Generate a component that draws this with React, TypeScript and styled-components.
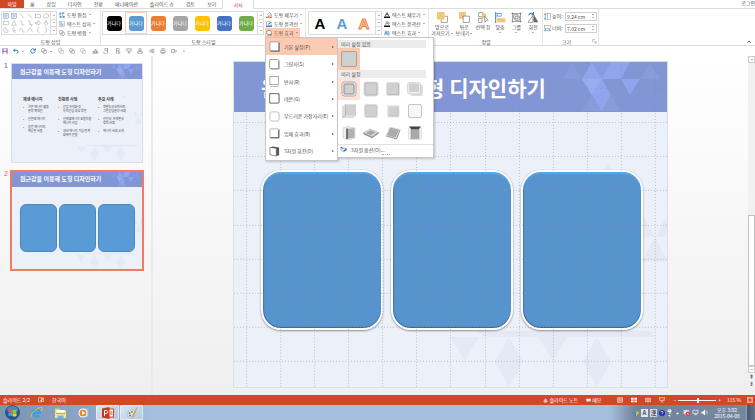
import React from "react";
import styled, { createGlobalStyle, css } from "styled-components";

const font = `"Liberation Sans", "Noto Sans CJK KR", sans-serif`;
const accent = "#d24726";
const peach = "#fdcbb1";
const line = "#dcdcdc";

const GlobalStyle = createGlobalStyle`
  * { box-sizing: border-box; }
  body { margin: 0; font: 5px/6px "Noto Sans CJK KR", sans-serif; color: #505050; background: #fff; overflow: hidden; }
  button, input { font: inherit; color: inherit; }
  button { border: 0; margin: 0; padding: 0; background: none; white-space: nowrap; }
  svg { display: block; flex: none; }
`;

/* ---------- icons ---------- */

const B = "#3f7fc1";
const G = "#7d7d7d";
const Y = "#eec777";

const art: Record<string, React.ReactNode> = {
  textframe: <><rect x="1" y="1" width="14" height="14" fill="#e8f1fa" stroke={B} /><path d="M4 5h8M4 8h8M4 11h5" stroke={G} /></>,
  line: <path d="M2 2l12 12" stroke={G} />,
  rect: <rect x="1" y="3" width="14" height="10" fill="none" stroke={G} />,
  oval: <ellipse cx="8" cy="8" rx="7" ry="6" fill="none" stroke={G} />,
  tri: <path d="M8 2l6 12H2z" fill="none" stroke={G} />,
  elbow: <path d="M2 3h6v10h6" fill="none" stroke={G} />,
  elbowArrow: <path d="M2 3h6v10h6M11 10l3 3-3 3" fill="none" stroke={G} />,
  arrowR: <path d="M1 6h7V2l7 6-7 6v-4H1z" fill="none" stroke={G} />,
  arrowD: <path d="M6 1h4v7h4l-6 7-6-7h4z" fill="none" stroke={G} />,
  freeform: <path d="M2 4l5-2 1 5 6 2-2 5H3z" fill="none" stroke={G} />,
  spiral: <path d="M13 13c-4 3-9-1-6-4s6-1 4 1-5-2-7-4 2-5 6-4" fill="none" stroke={G} />,
  curve: <path d="M1 10C4 0 8 3 9 8s2 6 6 6" fill="none" stroke={G} />,
  wave: <path d="M1 13C4 13 4 3 8 3s3 10 7 10" fill="none" stroke={G} />,
  braceL: <path d="M11 1C6 1 9 8 5 8c4 0 1 7 6 7" fill="none" stroke={G} />,
  braceR: <path d="M5 1c5 0 2 7 6 7-4 0-1 7-6 7" fill="none" stroke={G} />,
  editShape: <><path d="M3 4l9-2-3 6 5 6-11-2z" fill="none" stroke={B} strokeWidth="1.5" /><path d="M1 2h4v4H1zM10 1h4v3h-4zM2 11h4v4H2zM11 11h4v4h-4z" fill={B} /></>,
  textbox: <><rect x="1" y="2" width="14" height="12" fill="#fff" stroke={G} /><path d="M3 5h5M3 8h9M3 11h9" stroke={B} strokeWidth="1.5" /></>,
  merge: <><circle cx="6" cy="6" r="5" fill="#fff" stroke={G} strokeWidth="1.5" /><circle cx="10" cy="10" r="5" fill="none" stroke={G} strokeWidth="1.5" /></>,
  fill: <><path d="M4 6l5-5 5 5-5 5z" fill="#fff" stroke={G} strokeWidth="1.5" /><path d="M13 6c2 2 2 4 1 4" stroke={B} fill="none" strokeWidth="2" /><rect x="0" y="12" width="16" height="4" fill="#ed7d31" /></>,
  outline: <><path d="M2 1h9M1 2v9M14 6v6" stroke={B} strokeWidth="1.5" /><path d="M5 10l1-3 7-6 2 2-7 6z" fill={B} /><rect x="0" y="12" width="16" height="4" fill={B} /></>,
  effect: <><path d="M5 1h7l3 5-3 6H5L1 6z" fill="#fff" stroke={G} strokeWidth="2" /><path d="M5 14h9l2-6" stroke={G} fill="none" strokeWidth="2" /></>,
  textFill: <><path d="M3 11L8 1l5 10M5 7h6" fill="none" stroke="#333" strokeWidth="2" /><rect x="0" y="12" width="16" height="4" fill="#111" /></>,
  textOutline: <><path d="M3 11L8 1l5 10M5 7h6" fill="none" stroke={G} strokeWidth="2" /><path d="M12 2l2 6" stroke={B} strokeWidth="2" /><rect x="0" y="12" width="16" height="4" fill="#111" /></>,
  textEffect: <><path d="M1 14L5 2l4 12M3 9h5" fill="none" stroke={B} strokeWidth="2" /><path d="M10 3h3q2 2 0 5 4 3 0 6h-3z" fill="#bcd6ef" stroke={B} /></>,
  front: <><rect x="6" y="6" width="9" height="9" fill="#fff" stroke={G} /><rect x="0" y="0" width="11" height="11" fill={Y} /></>,
  back: <><rect x="0" y="0" width="10" height="10" fill={Y} /><rect x="6" y="6" width="9" height="9" fill="#fff" stroke={G} /></>,
  pane: <><rect x="1" y="1" width="6" height="6" fill="#fff" stroke={G} /><rect x="6" y="2" width="6" height="7" fill={Y} /><rect x="1" y="9" width="5" height="6" fill="#fff" stroke={G} /><path d="M9 6l6 6h-3l-2 3z" fill="#fff" stroke={G} /></>,
  align: <><path d="M1 0v16" stroke={B} strokeWidth="1.5" /><rect x="3" y="2" width="6" height="4" fill="#fff" stroke={B} /><rect x="3" y="9" width="12" height="6" fill={Y} /></>,
  group: <><rect x="2" y="2" width="12" height="12" fill="none" stroke={G} /><rect x="4" y="4" width="6" height="6" fill="none" stroke={G} /><rect x="6" y="6" width="6" height="6" fill="none" stroke={G} /><path d="M1 1h2v2H1zM13 1h2v2h-2zM1 13h2v2H1zM13 13h2v2h-2z" fill={B} /></>,
  rotate: <><path d="M8 15V3l7 12z" fill="#666" /><path d="M7 15V5L0 15z" fill="#fff" stroke={G} /><path d="M1 5c1-4 5-4 7-2M8 0v4H5" fill="none" stroke={B} strokeWidth="1.5" /></>,
  height: <><path d="M3 1v14M1 4l2-3 2 3M1 12l2 3 2-3" fill="none" stroke={B} strokeWidth="1.5" /><rect x="8" y="1" width="7" height="14" fill="#fff" stroke={G} /></>,
  width: <><rect x="1" y="1" width="14" height="7" fill="#fff" stroke={G} /><path d="M1 12h14M4 10l-3 2 3 3M12 10l3 2-3 3" fill="none" stroke={B} strokeWidth="1.5" /></>,
  launcher: <path d="M2 10V2h8M6 6l7 7M13 8v5H8" fill="none" stroke={G} strokeWidth="1.5" />,
  save: <><path d="M1 1h14v14H1z" fill="#8d5ca8" /><path d="M4 2h8v5H4zM4 10h8v5H4z" fill="#fff" /></>,
  undo: <path d="M5 2L1 6l4 4M2 6h8c5 0 5 8 0 8" fill="none" stroke="#2e6bb4" strokeWidth="2.5" />,
  redo: <path d="M13 5C10 0 2 2 2 8s9 8 12 1M14 1v5H9" fill="none" stroke="#2e6bb4" strokeWidth="2.5" />,
  union: <><circle cx="6" cy="6" r="5" fill="none" stroke="#888" strokeWidth="1.5" /><circle cx="10" cy="10" r="5" fill="none" stroke="#888" strokeWidth="1.5" /><path d="M6 10l4-4" stroke="#888" /></>,
  circles: <><circle cx="6" cy="6" r="5" fill="none" stroke="#aaa" strokeWidth="1.5" /><circle cx="10" cy="10" r="5" fill="none" stroke="#aaa" strokeWidth="1.5" /></>,
  bars: <><path d="M1 14h14M3 14V8h3v6M8 14V4h3v10" fill="none" stroke={G} strokeWidth="1.5" /><path d="M12 8h3v5h-3z" fill={B} /></>,
  flagL: <path d="M12 1H5v6h7zM12 1v14M3 11l-2 2 2 2h6" fill="none" stroke={G} strokeWidth="1.5" />,
  flagR: <path d="M4 15V1h7v6H4M9 9l5 3-5 3z" fill="none" stroke={G} strokeWidth="1.5" />,
  flagD: <path d="M2 2h12v6H2zM8 8v7M5 11l3 3 3-3" fill="none" stroke={G} strokeWidth="1.5" />,
  person: <path d="M5 2h6v5H5zM2 14V9h12v5z" fill="none" stroke={G} strokeWidth="1.5" />,
  speaker: <path d="M1 8l5-4v8zM9 3h4v10H9z" fill="none" stroke={G} strokeWidth="1.5" />,
  printer: <path d="M5 6V1h6v5M2 6h12v6H2zM5 12v3h6v-3" fill="none" stroke={G} strokeWidth="1.5" />,
  next: <path d="M1 4h8v8H1zM9 8h6M12 5l3 3-3 3" fill="none" stroke={G} strokeWidth="1.5" />,
  proof: <path d="M1 2h9v11H1zM10 3h5v9h-5M5 8l3 3 6-8" fill="none" stroke="#fff" strokeWidth="1.5" />,
  notes: <path d="M1 11h14M4 14h8M8 2l4 6H4z" fill="none" stroke="#fff" strokeWidth="2" />,
  memo: <path d="M1 2h14v8H9l-3 4v-4H1z" fill="#fff" />,
  viewNormal: <path d="M1 2h14v12H1zM5 2v12M7 5h6v5H7z" fill="none" stroke="#fff" strokeWidth="1.5" />,
  viewGrid: <path d="M0 2h7v5H0zM9 2h7v5H9zM0 9h7v5H0zM9 9h7v5H9z" fill="#fff" />,
  viewRead: <path d="M8 4C6 2 3 2 1 3v10c2-1 5-1 7 1 2-2 5-2 7-1V3c-2-1-5-1-7 1v10" fill="#e58b75" stroke="#fff" />,
  viewShow: <path d="M0 2h16M2 2v7h12V2M8 9v4M5 15l3-3 3 3" fill="none" stroke="#fff" strokeWidth="1.5" />,
  fit: <path d="M1 1h14v14H1zM4 7V4h3M9 4h3v3M12 9v3H9M7 12H4V9" fill="none" stroke="#fff" strokeWidth="1.5" />,
  rotateBox: <><path d="M1 4l7-2 5 4-3 8-7-3z" fill="#dfe9f3" stroke="#8aa" /><path d="M2 3l5 3M8 12l6-4M13 5l2 5" stroke="#2e6bb4" strokeWidth="2.5" /></>,
  shield: <><path d="M8 0L0 8l8 8z" fill="#3f7fd6" /><path d="M8 0l8 8-8 8z" fill="#e6c33c" /><path d="M4 4l4-4 4 4-4 4z" fill="#6bb045" /></>,
  help: <><circle cx="8" cy="8" r="8" fill="#1c2fae" /><path d="M5 6c0-4 6-3 6 0 0 2-3 2-3 4M8 12v1" fill="none" stroke="#fff" strokeWidth="2" /></>,
  net: <><path d="M2 3h11v8H2zM5 14h6" fill="#d5dbe4" stroke="#eee" /><circle cx="11" cy="11" r="5" fill="#dc2f2f" /><path d="M9 9l4 4M13 9l-4 4" stroke="#fff" strokeWidth="1.5" /></>,
  drive: <path d="M2 3h12v7H2zM5 13h7M8 10v3" fill="#7d8794" stroke="#f4f4f4" strokeWidth="1.5" />,
  volume: <><path d="M1 6h3l5-5v14L4 10H1z" fill="#fff" /><path d="M11 5q2 3 0 6M13 3q4 5 0 10" stroke="#fff" fill="none" /></>,
};

const Icon = ({ name, size = 6 }: { name: string; size?: number }) => (
  <svg width={size} height={size} viewBox="0 0 16 16" aria-hidden="true">{art[name]}</svg>
);

const Caret = styled.i`
  flex: none;
  border: 1px solid transparent;
  border-top-color: #666;
  border-bottom: 0;
`;

/* ---------- tabs ---------- */

const Page = styled.div`
  display: grid;
  grid-template-rows: 9px 37px 10px 1fr 10px 15px;
  min-height: 100vh;
  font-family: "Noto Sans CJK KR", sans-serif;
`;

const Tabs = styled.nav`
  display: flex;
  border-bottom: 1px solid ${line};
`;

const Tab = styled.button<{ $kind?: "file" | "active" }>`
  padding: 0 6px;
  line-height: 8px;
  ${(p) => p.$kind === "file" && css`width: 24px; background: ${accent}; color: #fff;`}
  ${(p) => p.$kind === "active" && css`
    height: 9px; padding: 0 10px; color: ${accent}; background: #fff;
    border: solid ${line}; border-width: 0 1px;
  `}
`;

const SignIn = styled.a`
  margin-left: auto;
  color: inherit;
  text-decoration: none;
  line-height: 6px;
`;

/* ---------- ribbon ---------- */

const Ribbon = styled.section`
  display: flex;
  border-bottom: 1px solid ${line};
`;

const Group = styled.div<{ $w: number }>`
  display: flex;
  flex-direction: column;
  justify-content: space-between;
  flex: none;
  width: ${(p) => p.$w}px;
  padding: 1px 0 0 1px;
  border-right: 1px solid #e6e6e6;
`;

const GroupBody = styled.div<{ $gap?: number }>`
  display: flex;
  gap: ${(p) => p.$gap ?? 1}px;
`;

const GroupLabel = styled.div`
  display: flex;
  justify-content: center;
  line-height: 6px;
`;

const SizeLabel = styled(GroupLabel)`
  justify-content: space-between;
  padding: 0 1px 0 18px;
`;

const Gallery = styled.div`
  display: flex;
  height: 24px;
  margin-top: 1px;
  border: 1px solid ${line};
`;

const ShapeGrid = styled.div`
  display: grid;
  grid-template-columns: repeat(6, 8px);
  align-items: center;
  justify-items: center;
`;

const Steps = styled.div`
  display: grid;
  width: 6px;
  border-left: 1px solid ${line};
`;

const Step = styled.button`
  display: grid;
  place-items: center;
  & + & { border-top: 1px solid ${line}; }
`;

const Scroller = () => (
  <Steps>
    <Step aria-label="위로"><Caret /></Step>
    <Step aria-label="아래로"><Caret /></Step>
    <Step aria-label="자세히"><Caret /></Step>
  </Steps>
);

const Commands = styled.div`
  display: grid;
  grid-auto-rows: 9px;
  justify-items: start;
`;

const Command = styled.button<{ $on?: boolean }>`
  display: flex;
  align-items: center;
  gap: 2px;
  height: 9px;
  padding: 0 2px 0 1px;
  ${(p) => p.$on && css`background: ${peach};`}
`;

const StyleCells = styled.div`
  display: grid;
  grid-template-columns: repeat(7, 22px);
`;

const StyleCell = styled.button<{ $on?: boolean }>`
  display: grid;
  place-items: center;
  border: 1px solid ${(p) => (p.$on ? peach : "transparent")};
`;

const Swatch = styled.span<{ $c: string }>`
  width: 15px;
  height: 15px;
  border-radius: 3px;
  background: ${(p) => p.$c};
  color: #fff;
  text-align: center;
  line-height: 14px;
`;

const ArtCells = styled.div`
  display: grid;
  grid-template-columns: repeat(3, 22px);
`;

const ArtCell = styled.button<{ $c: string; $outline?: boolean }>`
  font: bold 15px/24px ${font};
  color: ${(p) => p.$c};
  ${(p) => p.$outline && css`color: #f9cfb4; -webkit-text-stroke: 1px #ed8a4a;`}
`;

const Anchor = styled.div`
  position: relative;
`;

const BigCommand = styled.button<{ $w: number }>`
  display: flex;
  flex-direction: column;
  align-items: center;
  width: ${(p) => p.$w}px;
  padding-top: 2px;
  line-height: 6px;
  gap: 1px;
`;

const BigText = styled.span`
  display: flex;
  flex-direction: column;
  align-items: center;
`;

const WithCaret = styled.span`
  display: flex;
  align-items: center;
  gap: 1px;
  min-height: 4px;
`;

const SizeRow = styled.label`
  display: flex;
  align-items: center;
  gap: 1px;
  height: 12px;
`;

const SizeText = styled.span`
  width: 12px;
  white-space: nowrap;
`;

const SizeField = styled.span`
  display: flex;
  align-items: center;
  width: 32px;
  height: 9px;
  border: 1px solid #cfcfcf;
`;

const SizeInput = styled.input`
  flex: 1;
  min-width: 0;
  height: 7px;
  padding: 0 1px;
  border: 0;
  outline: 0;
  background: none;
`;

const Spin = styled.span`
  display: grid;
  gap: 2px;
  padding-right: 2px;
`;

const UpCaret = styled(Caret)`
  transform: rotate(180deg);
`;

const Collapse = styled.button`
  align-self: end;
  margin: 0 4px 2px auto;
`;

/* ---------- drop-down menu ---------- */

const Menu = styled.div`
  position: absolute;
  z-index: 5;
  top: 9px;
  left: 0;
  display: grid;
  grid-auto-rows: 1fr;
  width: 73px;
  height: 124px;
  border: 1px solid #c8c8c8;
  background: #fff;
  box-shadow: 1px 1px 2px #0003;
`;

const MenuItem = styled.button<{ $on?: boolean }>`
  display: flex;
  align-items: center;
  gap: 4px;
  padding: 0 4px 0 3px;
  ${(p) => p.$on && css`background: ${peach};`}
`;

const RightCaret = styled.i`
  margin-left: auto;
  border: 2px solid transparent;
  border-left-color: #555;
  border-right: 0;
  border-width: 1px 0 1px 2px;
`;

const SubMenu = styled.div`
  position: absolute;
  z-index: 6;
  top: 9px;
  left: 72px;
  width: 97px;
  padding: 2px 0 1px;
  border: 1px solid #c8c8c8;
  background: #fff;
  box-shadow: 1px 1px 2px #0003;
`;

const SubHeader = styled.div`
  margin-right: 7px;
  padding-left: 3px;
  background: #ececec;
  line-height: 8px;
`;

const PresetGrid = styled.div`
  display: grid;
  grid-template-columns: repeat(4, 22px);
  grid-auto-rows: 22px;
`;

const Preset = styled.button<{ $on?: "full" | "soft" }>`
  display: grid;
  place-items: center;
  background: ${(p) => (p.$on === "full" ? peach : p.$on === "soft" ? "#fde3d9" : "none")};
`;

const Options = styled.button`
  display: flex;
  align-items: center;
  gap: 4px;
  width: 100%;
  height: 10px;
  padding-left: 2px;
  border-top: 1px solid #e2e2e2;
`;

const Grip = styled.div`
  width: 8px;
  height: 2px;
  margin: 0 auto;
  border-top: 1px dotted #aaa;
`;

const menuArt: React.ReactNode[] = [
  <><rect x="2" y="2" width="20" height="20" rx="2" fill="#fff" stroke="#888" strokeWidth="1.5" /><path d="M3 22h19V4" stroke="#777" strokeWidth="3" fill="none" /></>,
  <><rect x="3" y="3" width="20" height="20" rx="3" fill="#999" /><rect x="1" y="1" width="20" height="20" rx="3" fill="#fff" stroke="#777" strokeWidth="1.5" /></>,
  <><rect x="2" y="1" width="19" height="18" fill="#fff" stroke="#888" strokeWidth="1.5" /><path d="M2 23h19" stroke="#bbb" strokeWidth="2" /></>,
  <><rect x="1" y="1" width="21" height="21" rx="3" fill="#fff" stroke="#888" strokeWidth="3" /></>,
  <><rect x="2" y="2" width="20" height="20" rx="4" fill="#fff" stroke="#bbb" strokeWidth="2" /></>,
  <><rect x="2" y="2" width="20" height="20" rx="2" fill="#fff" stroke="#999" strokeWidth="1.5" /><path d="M3 21h18V4" stroke="#777" strokeWidth="3" fill="none" /></>,
  <><path d="M2 3l14 2v17L2 19z" fill="#fff" stroke="#666" strokeWidth="1.5" /><path d="M16 5l6-2v17l-6 2zM2 3l6-2 14 2-6 2z" fill="#555" /></>,
];

const face = "#d0d0d0";
const presetArt: React.ReactNode[] = [
  <><rect x="2" y="2" width="28" height="28" rx="5" fill="#f4f4f4" stroke="#aaa" strokeWidth="2" /><rect x="6" y="6" width="20" height="20" rx="1" fill={face} stroke="#8a8a8a" strokeWidth="2" /></>,
  <><rect x="1" y="1" width="30" height="30" rx="6" fill="#dedede" /><rect x="4" y="4" width="24" height="24" rx="2" fill={face} stroke="#b8b8b8" strokeWidth="2" /></>,
  <><rect x="3" y="3" width="27" height="27" rx="3" fill="#e4e4e4" /><rect x="3" y="3" width="24" height="24" fill={face} /><path d="M4 27h23V4" fill="none" stroke="#bcbcbc" strokeWidth="2" /></>,
  <><rect x="7" y="7" width="25" height="23" rx="4" fill="#ddd" /><rect x="1" y="3" width="26" height="23" rx="4" fill="#eee" stroke="#bbb" /><rect x="4" y="5" width="20" height="17" fill={face} /></>,
  <><path d="M2 8l5-5h23v22l-5 5H2z" fill="#dcdcdc" /><path d="M9 3h21v21H9z" fill={face} /><path d="M9 3v21l-6 6" fill="none" stroke="#b8b8b8" strokeWidth="2" /></>,
  <><rect x="2" y="2" width="28" height="28" rx="5" fill="#dfdfdf" /><rect x="5" y="5" width="22" height="22" rx="3" fill={face} stroke="#b9b9b9" /></>,
  <><rect x="4" y="4" width="25" height="25" fill="#e9e9e9" /><rect x="7" y="7" width="19" height="19" fill={face} /><path d="M7 26h19V7" fill="none" stroke="#bbb" strokeWidth="2" /></>,
  <><rect x="3" y="3" width="26" height="26" rx="3" fill="#f8f8f8" stroke="#c4c4c4" strokeWidth="2" /></>,
  <><path d="M4 6l8-3 16 3v20l-15 4-9-5z" fill="#eee" stroke="#bbb" /><path d="M12 8l15-2v19l-15 3z" fill="#b0b0b0" /><path d="M12 7v21" stroke="#555" strokeWidth="3" /></>,
  <><path d="M1 16l13-8 17 7-13 9z" fill="#d5d5d5" stroke="#999" /><path d="M8 16l7-4 8 3-7 4z" fill="#aaa" stroke="#888" /><path d="M1 17l17 8 13-9" fill="none" stroke="#999" strokeWidth="3" /></>,
  <><path d="M9 3l22 5-8 20-22-6z" fill="#ddd" /><path d="M11 6l16 4-6 14-16-4z" fill="#adadad" stroke="#999" /><path d="M2 22l21 6 7-18" fill="none" stroke="#999" strokeWidth="2" /></>,
  <><rect x="3" y="4" width="26" height="25" rx="3" fill="#f2f2f2" stroke="#ccc" /><path d="M4 3h24l-5 6H9z" fill="#444" /><rect x="8" y="9" width="16" height="18" fill="#aaa" stroke="#888" /></>,
];

/* ---------- quick access ---------- */

const QuickBar = styled.div`
  display: flex;
  align-items: center;
  justify-content: space-between;
  width: 189px;
  padding-left: 2px;
`;

const Quick = styled.button<{ $menu?: boolean }>`
  display: flex;
  align-items: center;
  justify-content: space-between;
  width: ${(p) => (p.$menu ? 11 : 6)}px;
`;

/* ---------- workspace ---------- */

const Workspace = styled.main`
  display: flex;
  min-height: 0;
  background: linear-gradient(#fff, #efefef);
`;

const Sidebar = styled.aside`
  display: flex;
  flex-direction: column;
  gap: 6px;
  width: 153px;
  flex: none;
  padding: 6px 7px 0 4px;
  border-right: 2px solid #eaeaea;
`;

const ThumbRow = styled.div<{ $on?: boolean }>`
  display: grid;
  grid-template-columns: 6px 1fr;
  font: 7px/8px ${font};
  color: ${(p) => (p.$on ? "#e8664a" : "#666")};
`;

const Thumb = styled.button<{ $on?: boolean }>`
  text-align: left;
  border: ${(p) => (p.$on ? "2px solid #ef7b60" : "1px solid #d8dde8")};
  margin: ${(p) => (p.$on ? "0" : "1px")};
`;

const Slide = styled.span<{ $edge?: boolean }>`
  position: relative;
  display: block;
  aspect-ratio: 4 / 3;
  background: #ecf0f8;
  overflow: hidden;
  ${(p) => p.$edge && css`box-shadow: 0 0 0 1px #d3e2f0; overflow: visible;`}
`;

const Band = styled.span<{ $big?: boolean }>`
  display: flex;
  align-items: center;
  height: ${(p) => (p.$big ? 50 : 15)}px;
  padding-left: ${(p) => (p.$big ? 27 : 8)}px;
  background: #8295d5;
  color: #fff;
  white-space: nowrap;
  font: bold ${(p) => (p.$big ? "21px/26px" : "6px/8px")} "Noto Sans CJK KR", sans-serif;
`;

const BandText = styled.span`
  position: relative;
  z-index: 1;
`;

const Overlay = styled.svg`
  position: absolute;
  inset: 0;
  width: 100%;
  height: 100%;
  pointer-events: none;
`;

const Decor = () => (
  <Overlay viewBox="0 0 433 325" aria-hidden="true">
    <g fill="#8fa6ee">
      <path d="M358 0h38l-9 17h-19l9 16-9 16-20-32z" />
      <path d="M358 0h19l-9 17z" fill="#859be2" />
      <path d="M348 17h20l-10 16z" fill="#98adf1" />
      <path d="M387 17h19l-10 16z" />
      <path d="M329 17l9-16 10 16zM407 17l9-16 10 16zM348 49l10-16 10 16zM368 49l9-16 9 16z" fill="#8a9bd9" />
    </g>
    <path
      d="M275 275l14 25-14 25-14-25zM363 275l14 25-14 25-14-25zM304 275h29l-14 24zM216 275h29l-14 24zM243 269h173l5 6H250zM409 153l12 22h-12zM433 153v22h-11zM421 175l12 23v2h-24v-2zM368 112l6-11 6 11z"
      fill="#e4e9f3"
    />
  </Overlay>
);

const columns = [12, 46, 80, 114, 148, 182, 216, 251, 285, 319, 353, 387, 421];
const rows = [26, 60, 94, 128, 163, 197, 231, 265, 299];

const GridLines = () => (
  <Overlay viewBox="0 0 433 325" aria-hidden="true">
    <g stroke="#8b909a" strokeOpacity=".5" strokeWidth="1" strokeDasharray="1 2">
      {columns.map((x) => <path key={x} d={`M${x + 0.5} 0V325`} />)}
      {rows.map((y) => <path key={y} d={`M0 ${y + 0.5}H433`} />)}
    </g>
  </Overlay>
);

const Cards = styled.span<{ $big?: boolean }>`
  position: relative;
  display: flex;
  ${(p) => (p.$big ? css`gap: 8px; padding: 58px 24px 0 27px;` : css`gap: 2px; padding: 17px 7px 0 8px;`)}
`;

const Card = styled.span<{ $big?: boolean }>`
  flex: 1;
  background: #5b9bd5;
  border: 1px solid #4b88c0;
  border-radius: 6px;
  aspect-ratio: 37 / 48;
  ${(p) => p.$big && css`
    aspect-ratio: 61 / 80;
    background: #5794cd;
    border: 2px solid #fff;
    border-radius: 20px;
    box-shadow: 0 0 1px #b0b4bc, 0 1px 2px #0006,
      inset 0 2px 1px #5aa5ea, inset 0 -1px 1px #2f6397, inset 1px 0 1px #3c76ae;
  `}
`;

const Outline = styled.span`
  position: relative;
  display: grid;
  grid-template-columns: 35px 40px 1fr;
  padding: 18px 0 0 11px;
  color: #444;
  font: 3px/4px "Noto Sans CJK KR", sans-serif;
`;

const OutlineCol = styled.span`
  display: flex;
  flex-direction: column;
  gap: 4px;
  white-space: pre;
`;

const OutlineHead = styled.b`
  font-size: 4px;
`;

const Bullet = styled.span`
  display: flex;
  gap: 4px;
  &::before { content: "•"; }
`;

const Canvas = styled.section`
  flex: 1;
  min-width: 0;
  padding: 6px 81px 0 81px;
`;

const ScrollBar = styled.div`
  display: flex;
  flex-direction: column;
  width: 7px;
  flex: none;
  margin-bottom: 8px;
  background: #f1f1f1;
`;

const ScrollButton = styled.button<{ $plain?: boolean }>`
  display: grid;
  place-items: center;
  height: 7px;
  font: 6px/7px "DejaVu Sans", sans-serif;
  ${(p) => !p.$plain && css`border: 1px solid #ccc; background: #fff;`}
`;

const ScrollTrack = styled.div`
  display: flex;
  flex: 1;
  align-items: flex-end;
`;

const ScrollThumb = styled.div`
  width: 7px;
  height: 50%;
  border: 1px solid #c2c2c2;
  background: #fff;
`;

/* ---------- status bar and taskbar ---------- */

const Status = styled.footer`
  display: flex;
  align-items: center;
  gap: 8px;
  padding: 0 2px 0 3px;
  background: ${accent};
  color: #fff;
  white-space: nowrap;
`;

const StatusButton = styled.button`
  display: flex;
  align-items: center;
  gap: 1px;
`;

const Right = styled.div<{ $gap: number }>`
  display: flex;
  align-items: center;
  gap: ${(p) => p.$gap}px;
  margin-left: auto;
`;

const ZoomArea = styled.div`
  display: flex;
  align-items: center;
  gap: 6px;
`;

const Zoom = styled.div`
  display: flex;
  align-items: center;
  gap: 2px;
`;

const Range = styled.input`
  appearance: none;
  width: 38px;
  height: 6px;
  margin: 0;
  background: linear-gradient(#fff, #fff) center / 100% 1px no-repeat;
  &::-webkit-slider-thumb { appearance: none; width: 2px; height: 5px; background: #fff; }
`;

const Taskbar = styled.footer`
  display: flex;
  align-items: stretch;
  background: linear-gradient(90deg, #7b92b0 0, #8ea7c8 90px, #a5bedd 150px, #a5bedd 610px, #72849e 635px, #76879f 100%);
`;

const TaskButton = styled.button<{ $on?: boolean }>`
  display: grid;
  place-items: center;
  width: 24px;
  ${(p) => p.$on && css`
    width: 23px; margin-right: 1px; border: 1px solid #e3ecf6; border-radius: 1px;
    background: linear-gradient(135deg, #e9f0f8cc, #bccde0cc);
  `}
`;

const Ime = styled.span`
  width: 7px;
  background: #dfe5ec;
  color: #555;
  text-align: center;
  font: bold 6px/8px "Noto Sans CJK KR", sans-serif;
`;

const Clock = styled.time`
  width: 34px;
  color: #fff;
  text-align: center;
`;

const ShowDesktop = styled.button`
  align-self: stretch;
  width: 9px;
  border-left: 1px solid #92a2b8;
  background: linear-gradient(90deg, #45556e, #65758c);
`;

const shapeNames = [
  "textframe", "textframe", "line", "line", "rect", "oval",
  "rect", "tri", "elbow", "elbowArrow", "arrowR", "arrowD",
  "freeform", "spiral", "curve", "wave", "braceL", "braceR",
];
const swatches = ["#000", "#5b9bd5", "#ed7d31", "#a5a5a5", "#ffc000", "#4472c4", "#70ad47"];
const menuItems = ["기본 설정(P)", "그림자(S)", "반사(R)", "네온(G)", "부드러운 가장자리(E)", "입체 효과(B)", "3차원 회전(D)"];
const quickItems: [string, string, boolean?][] = [
  ["save", "저장"], ["undo", "실행 취소", true], ["redo", "다시 실행"], ["union", "도형 병합", true],
  ["circles", "병합"], ["union", "결합"], ["circles", "교차"], ["bars", "차트"], ["flagL", "왼쪽"], ["flagR", "오른쪽"],
  ["flagD", "아래쪽"], ["person", "가운데"], ["speaker", "소리"], ["printer", "인쇄"], ["next", "다음"],
];
const arrange: [string, string, string, number][] = [
  ["front", "앞으로", "가져오기", 24], ["back", "뒤로", "보내기", 20], ["pane", "선택 창", "", 18],
  ["align", "맞춤", "", 16], ["group", "그룹", "", 17], ["rotate", "회전", "", 16],
];
const outline = [
  { head: "재생 에너지", items: ["기존 에너지 활용\n분야 확대안", "신환경 에너지", "융전 에너지의\n재순환 사용"] },
  { head: "친환경 사업", items: ["산업 녹색화 및\n녹색산업 육성 방안", "신재생에너지 효율적용\n에너지 사업", "국내 에너지 기업 연계\n화해와 친율"] },
  { head: "주요 사례", items: ["개발도상국에서의\n그린산업분야 사례", "선진국, 저개발국\n정책 사례", "에너지 사례 소개"] },
];
const title = "원근감을 이용해 도형 디자인하기";

export default function App() {
  return (
    <Page>
      <GlobalStyle />
      <Tabs>
        <Tab $kind="file">파일</Tab>
        {["홈", "삽입", "디자인", "전환", "애니메이션", "슬라이드 쇼", "검토", "보기"].map((t) => <Tab key={t}>{t}</Tab>)}
        <Tab $kind="active">서식</Tab>
        <SignIn href="#">로그인</SignIn>
      </Tabs>

      <Ribbon>
        <Group $w={101}>
          <GroupBody>
            <Gallery>
              <ShapeGrid>{shapeNames.map((n, i) => <Icon key={i} name={n} />)}</ShapeGrid>
              <Scroller />
            </Gallery>
            <Commands>
              <Command><Icon name="editShape" />도형 편집<Caret /></Command>
              <Command><Icon name="textbox" />텍스트 상자<Caret /></Command>
              <Command><Icon name="merge" />도형 병합<Caret /></Command>
            </Commands>
          </GroupBody>
          <GroupLabel>도형 삽입</GroupLabel>
        </Group>

        <Group $w={205}>
          <GroupBody>
            <Gallery>
              <StyleCells>
                {swatches.map((c, i) => <StyleCell key={c} $on={i === 1}><Swatch $c={c}>가나다</Swatch></StyleCell>)}
              </StyleCells>
              <Scroller />
            </Gallery>
            <Commands>
              <Command><Icon name="fill" />도형 채우기<Caret /></Command>
              <Command><Icon name="outline" />도형 윤곽선<Caret /></Command>
              <Anchor>
                <Command $on aria-expanded="true"><Icon name="effect" />도형 효과<Caret /></Command>
                <Menu role="menu">
                  {menuItems.map((m, i) => (
                    <MenuItem key={m} role="menuitem" $on={i === 0}>
                      <svg width="11" height="11" viewBox="0 0 24 24" aria-hidden="true">{menuArt[i]}</svg>
                      {m}
                      <RightCaret />
                    </MenuItem>
                  ))}
                </Menu>
                <SubMenu role="menu">
                  <SubHeader>미리 설정 없음</SubHeader>
                  <PresetGrid>
                    <Preset $on="full" aria-label="없음">
                      <svg width="16" height="16" viewBox="0 0 32 32" aria-hidden="true">
                        <rect x="1" y="1" width="30" height="30" rx="3" fill="#cfcfcf" stroke="#a3a3a3" strokeWidth="2" />
                      </svg>
                    </Preset>
                  </PresetGrid>
                  <SubHeader>미리 설정</SubHeader>
                  <PresetGrid>
                    {presetArt.map((p, i) => (
                      <Preset key={i} $on={i === 0 ? "soft" : undefined} aria-label={`기본 설정 ${i + 1}`}>
                        <svg width="16" height="16" viewBox="0 0 32 32" aria-hidden="true">{p}</svg>
                      </Preset>
                    ))}
                  </PresetGrid>
                  <Options><Icon name="rotateBox" size={7} />3차원 옵션(O)...</Options>
                  <Grip />
                </SubMenu>
              </Anchor>
            </Commands>
          </GroupBody>
          <GroupLabel>도형 스타일</GroupLabel>
        </Group>

        <Group $w={123}>
          <GroupBody>
            <i />
            <Gallery>
              <ArtCells>
                <ArtCell $c="#000">A</ArtCell>
                <ArtCell $c="#5b9bd5">A</ArtCell>
                <ArtCell $c="#ed7d31" $outline>A</ArtCell>
              </ArtCells>
              <Scroller />
            </Gallery>
            <Commands>
              <Command><Icon name="textFill" />텍스트 채우기<Caret /></Command>
              <Command><Icon name="textOutline" />텍스트 윤곽선<Caret /></Command>
              <Command><Icon name="textEffect" />텍스트 효과<Caret /></Command>
            </Commands>
          </GroupBody>
        </Group>

        <Group $w={114}>
          <GroupBody $gap={0}>
            {arrange.map(([icon, a, b, w]) => (
              <BigCommand key={icon} $w={w}>
                <Icon name={icon} size={11} />
                <BigText>
                  {a}
                  <WithCaret>{b}{icon !== "pane" && <Caret />}</WithCaret>
                </BigText>
              </BigCommand>
            ))}
          </GroupBody>
          <GroupLabel>정렬</GroupLabel>
        </Group>

        <Group $w={56}>
          <div>
            <SizeRow>
              <Icon name="height" size={7} /><SizeText>높이:</SizeText>
              <SizeField><SizeInput defaultValue="9.24 cm" /><Spin><UpCaret /><Caret /></Spin></SizeField>
            </SizeRow>
            <SizeRow>
              <Icon name="width" size={7} /><SizeText>너비:</SizeText>
              <SizeField><SizeInput defaultValue="7.02 cm" /><Spin><UpCaret /><Caret /></Spin></SizeField>
            </SizeRow>
          </div>
          <SizeLabel>크기<Icon name="launcher" size={5} /></SizeLabel>
        </Group>
        <Collapse aria-label="리본 메뉴 축소">
          <svg width="4" height="3" viewBox="0 0 8 6" aria-hidden="true"><path d="M1 5l3-3 3 3" fill="none" stroke="#555" strokeWidth="2" /></svg>
        </Collapse>
      </Ribbon>

      <QuickBar>
        {quickItems.map(([icon, label, menu], i) => (
          <Quick key={i} $menu={menu} aria-label={label}><Icon name={icon} />{menu && <Caret />}</Quick>
        ))}
        <Quick aria-label="사용자 지정"><Caret /></Quick>
      </QuickBar>

      <Workspace>
        <Sidebar>
          <ThumbRow>
            1
            <Thumb>
              <Slide>
                <Band><BandText>{title}</BandText></Band>
                <Decor />
                <Outline>
                  {outline.map((c) => (
                    <OutlineCol key={c.head}>
                      <OutlineHead>{c.head}</OutlineHead>
                      {c.items.map((t) => <Bullet key={t}>{t}</Bullet>)}
                    </OutlineCol>
                  ))}
                </Outline>
              </Slide>
            </Thumb>
          </ThumbRow>
          <ThumbRow $on>
            2
            <Thumb $on>
              <Slide>
                <Band><BandText>{title}</BandText></Band>
                <Decor />
                <Cards><Card /><Card /><Card /></Cards>
              </Slide>
            </Thumb>
          </ThumbRow>
        </Sidebar>
        <Canvas>
          <Slide $edge>
            <Band $big><BandText>{title}</BandText></Band>
            <Decor />
            <Cards $big><Card $big /><Card $big /><Card $big /></Cards>
            <GridLines />
          </Slide>
        </Canvas>
        <ScrollBar>
          <ScrollButton aria-label="위로"><UpCaret /></ScrollButton>
          <ScrollTrack><ScrollThumb /></ScrollTrack>
          <ScrollButton aria-label="아래로"><Caret /></ScrollButton>
          <ScrollButton $plain aria-label="이전 슬라이드">⇞</ScrollButton>
          <ScrollButton $plain aria-label="다음 슬라이드">⇟</ScrollButton>
        </ScrollBar>
      </Workspace>

      <Status>
        <span>슬라이드 2/2</span>
        <Icon name="proof" />
        <span>한국어</span>
        <Right $gap={8}>
          <StatusButton><Icon name="notes" size={5} />슬라이드 노트</StatusButton>
          <StatusButton><Icon name="memo" size={5} />메모</StatusButton>
          <i />
          <StatusButton aria-label="기본"><Icon name="viewNormal" /></StatusButton>
          <StatusButton aria-label="여러 슬라이드"><Icon name="viewGrid" /></StatusButton>
          <StatusButton aria-label="읽기용 보기"><Icon name="viewRead" /></StatusButton>
          <StatusButton aria-label="슬라이드 쇼"><Icon name="viewShow" /></StatusButton>
          <ZoomArea>
            <Zoom>
              <StatusButton aria-label="축소">−</StatusButton>
              <Range type="range" aria-label="확대/축소" defaultValue={52} />
              <StatusButton aria-label="확대">+</StatusButton>
            </Zoom>
            <span>115 %</span>
            <StatusButton aria-label="창에 맞춤"><Icon name="fit" /></StatusButton>
          </ZoomArea>
        </Right>
      </Status>

      <Taskbar>
        <TaskButton aria-label="시작">
          <svg width="15" height="15" viewBox="0 0 30 30" aria-hidden="true">
            <circle cx="15" cy="15" r="14" fill="#1d5a93" stroke="#0d3b66" />
            <ellipse cx="15" cy="9" rx="11" ry="7" fill="#6aa6d1" opacity=".6" />
            <path d="M7 9q4-2 7 0v6q-4-2-7 0z" fill="#f0562f" /><path d="M15 9q4 2 8 0v6q-4 2-8 0z" fill="#8fce3a" />
            <path d="M7 16q4-2 7 0v6q-4-2-7 0z" fill="#3fa9e8" /><path d="M15 16q4 2 8 0v6q-4 2-8 0z" fill="#ffd02c" />
          </svg>
        </TaskButton>
        <TaskButton aria-label="Internet Explorer">
          <svg width="13" height="13" viewBox="0 0 26 26" aria-hidden="true">
            <path d="M7 14h13a7 7 0 1 0-2 5" fill="none" stroke="#2f9fe6" strokeWidth="4" />
            <path d="M3 22C-1 18 14 2 24 3c2 1 0 5-2 7" fill="none" stroke="#f3c43c" strokeWidth="2" />
          </svg>
        </TaskButton>
        <TaskButton aria-label="탐색기">
          <svg width="13" height="12" viewBox="0 0 26 24" aria-hidden="true">
            <path d="M2 3h9l2 3h11v16H2z" fill="#f0d27a" /><path d="M5 6h16v8H5z" fill="#fff" /><path d="M2 11h22v11H2z" fill="#f7e29a" />
            <path d="M7 17h12v5H7z" fill="#6bb4e4" /><path d="M4 13h18M4 2h5" stroke="#8cbf5b" strokeWidth="2" />
          </svg>
        </TaskButton>
        <TaskButton aria-label="미디어 플레이어">
          <svg width="12" height="12" viewBox="0 0 24 24" aria-hidden="true">
            <rect x="7" y="2" width="15" height="19" rx="2" fill="#8fc3ea" stroke="#5a9bd0" />
            <circle cx="10" cy="12" r="9" fill="#fff" /><circle cx="10" cy="12" r="7" fill="#f18424" /><path d="M8 8l7 4-7 4z" fill="#fff" />
          </svg>
        </TaskButton>
        <TaskButton $on aria-label="PowerPoint">
          <svg width="12" height="12" viewBox="0 0 24 24" aria-hidden="true">
            <rect x="12" y="4" width="11" height="16" fill="#fff" stroke={accent} strokeWidth="2" /><path d="M15 10h6M15 14h6" stroke={accent} strokeWidth="2" />
            <path d="M0 3l15-3v24L0 21z" fill="#c8361b" /><path d="M5 18V7h3c5 0 5 6 0 6H5" fill="none" stroke="#fff" strokeWidth="2" />
          </svg>
        </TaskButton>
        <TaskButton $on aria-label="그림판">
          <svg width="12" height="12" viewBox="0 0 24 24" aria-hidden="true">
            <path d="M2 14c0-6 8-10 14-7 5 3-1 5 1 8s-2 7-7 7-8-4-8-8z" fill="#d5e8f5" stroke="#7aa7c9" />
            <circle cx="7" cy="12" r="2" fill="#e4553c" /><circle cx="12" cy="10" r="2" fill="#58a942" /><circle cx="8" cy="17" r="2" fill="#3b78c9" />
            <path d="M22 1l-9 16-2 5 4-3z" fill="#e5a33b" stroke="#d08f30" />
          </svg>
        </TaskButton>
        <Right $gap={2}>
          <Icon name="shield" />
          <Ime>A</Ime>
          <Ime>漢</Ime>
          <Icon name="help" />
          <svg width="5" height="8" viewBox="0 0 10 16" aria-hidden="true"><path d="M2 2h6v3H2zM4 8h4M4 12v2h3" fill="none" stroke="#fff" strokeWidth="2" /></svg>
          <svg width="7" height="4" viewBox="0 0 14 8" aria-hidden="true"><path d="M5 6l2-3 2 3z" fill="#fff" stroke="#fff" /></svg>
          <Icon name="net" size={7} />
          <Icon name="drive" size={7} />
          <Icon name="volume" size={7} />
          <Clock>오후 3:02<br />2015-04-08</Clock>
          <ShowDesktop aria-label="바탕 화면 보기" />
        </Right>
      </Taskbar>
    </Page>
  );
}
